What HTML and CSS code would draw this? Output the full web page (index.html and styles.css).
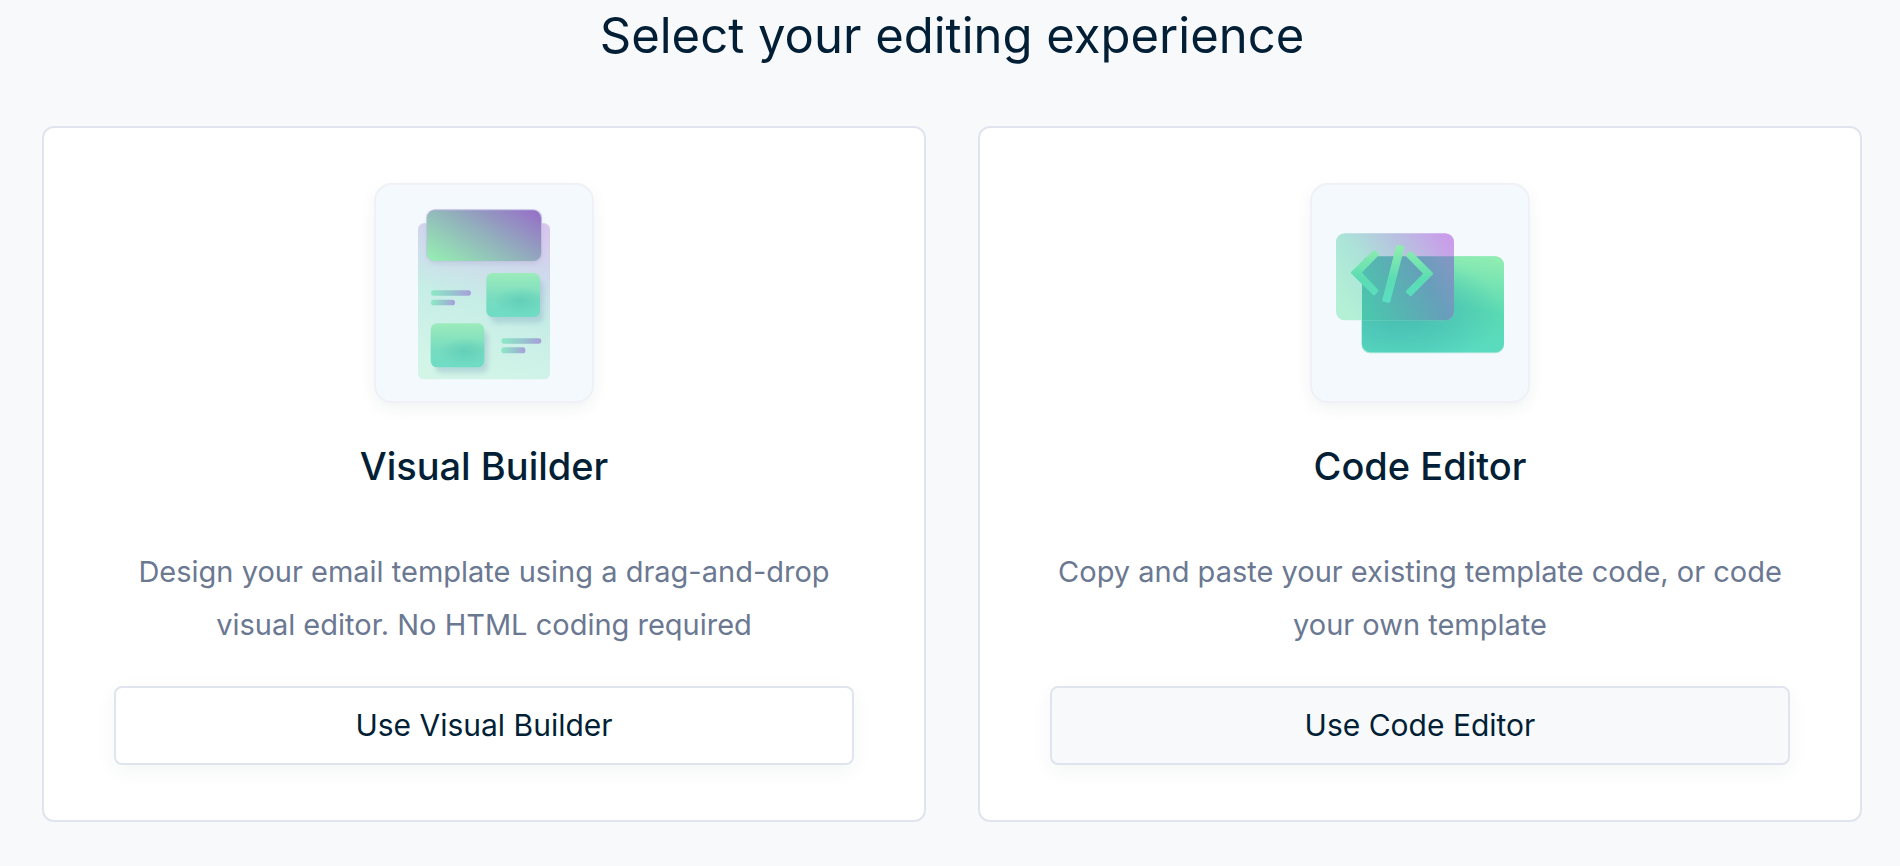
FILE: index.html
```html
<!DOCTYPE html>
<html lang="en">
<head>
<meta charset="utf-8">
<title>Select your editing experience</title>
<link rel="stylesheet" href="styles.css">
</head>
<body>
<main class="page">
  <h1 class="page-title">Select your editing experience</h1>
  <div class="options">
    <section class="card">
      <div class="tile">
        <svg class="art" viewBox="48 44 648 648" aria-hidden="true">
          <defs>
            <linearGradient id="sheet" gradientUnits="userSpaceOnUse" x1="560" y1="190" x2="420" y2="640">
              <stop offset="0" stop-color="#d8c8ee"/>
              <stop offset="0.25" stop-color="#cfd9ec"/>
              <stop offset="0.55" stop-color="#c6ede6"/>
              <stop offset="1" stop-color="#d3f5e8"/>
            </linearGradient>
            <linearGradient id="banner" gradientUnits="userSpaceOnUse" x1="275" y1="300" x2="425" y2="55">
              <stop offset="0" stop-color="#95ebb3"/>
              <stop offset="0.5" stop-color="#92b0bc"/>
              <stop offset="1" stop-color="#966fc8"/>
            </linearGradient>
            <linearGradient id="block" x1="0" y1="0" x2="0" y2="1">
              <stop offset="0" stop-color="#9cebbb"/>
              <stop offset="0.6" stop-color="#77dcc0"/>
              <stop offset="1" stop-color="#6fdcc5"/>
            </linearGradient>
            <radialGradient id="block-shade" cx="0.64" cy="0.64" r="0.5" gradientTransform="translate(0 0.23) scale(1 0.64)">
              <stop offset="0" stop-color="#5ccab5" stop-opacity="0.7"/>
              <stop offset="1" stop-color="#5ccab5" stop-opacity="0"/>
            </radialGradient>
            <linearGradient id="line" x1="0" y1="0" x2="1" y2="0">
              <stop offset="0" stop-color="#8ce9c6"/>
              <stop offset="0.5" stop-color="#95c8cd"/>
              <stop offset="1" stop-color="#a99edb"/>
            </linearGradient>
            <filter id="soft" x="-20%" y="-20%" width="150%" height="150%">
              <feGaussianBlur stdDeviation="8"/>
            </filter>
          </defs>
          <rect x="174" y="159" width="396" height="468" rx="17" fill="url(#sheet)"/>
          <rect x="202" y="126" width="342" height="154" rx="24" fill="#8b7fb5" opacity="0.2" filter="url(#soft)"/>
          <rect x="199" y="117" width="347" height="156" rx="26" fill="#c0bce0"/>
          <rect x="201" y="120" width="342" height="152" rx="24" fill="url(#banner)"/>
          <rect x="392" y="330" width="158" height="128" rx="18" fill="#7fa6bd" opacity="0.35" filter="url(#soft)"/>
          <rect x="379" y="308" width="161" height="132" rx="19" fill="url(#block)"/>
          <rect x="379" y="308" width="161" height="132" rx="19" fill="url(#block-shade)"/>
          <rect x="226" y="482" width="158" height="126" rx="18" fill="#7fa6bd" opacity="0.35" filter="url(#soft)"/>
          <rect x="212" y="459" width="161" height="132" rx="19" fill="url(#block)"/>
          <rect x="212" y="459" width="161" height="132" rx="19" fill="url(#block-shade)"/>
          <rect x="213" y="360" width="120" height="16" rx="8" fill="url(#line)"/>
          <rect x="213" y="388" width="72" height="17" rx="8" fill="url(#line)"/>
          <rect x="424" y="504" width="120" height="16" rx="8" fill="url(#line)"/>
          <rect x="424" y="531" width="72" height="18" rx="8" fill="url(#line)"/>
        </svg>
      </div>
      <h2 class="card-title">Visual Builder</h2>
      <p class="card-text">Design your email template using a drag-and-drop visual editor. No HTML coding required</p>
      <button class="action" type="button">Use Visual Builder</button>
    </section>
    <section class="card">
      <div class="tile">
        <svg class="art" viewBox="51 44 648 648" aria-hidden="true">
          <defs>
            <linearGradient id="back" gradientUnits="userSpaceOnUse" x1="595" y1="235" x2="535" y2="545">
              <stop offset="0" stop-color="#9af0b2"/>
              <stop offset="0.6" stop-color="#5adab3"/>
              <stop offset="1" stop-color="#5adbc0"/>
            </linearGradient>
            <radialGradient id="back-shade" gradientUnits="userSpaceOnUse" cx="320" cy="425" r="300" gradientTransform="translate(0 191) scale(1 0.55)">
              <stop offset="0" stop-color="#42b3af" stop-opacity="0.8"/>
              <stop offset="0.5" stop-color="#44b8b2" stop-opacity="0.5"/>
              <stop offset="1" stop-color="#44b8b2" stop-opacity="0"/>
            </radialGradient>
            <linearGradient id="front" gradientUnits="userSpaceOnUse" x1="150" y1="420" x2="455" y2="205">
              <stop offset="0" stop-color="#b4f0d6"/>
              <stop offset="0.33" stop-color="#abe4d8"/>
              <stop offset="0.65" stop-color="#b7c3df"/>
              <stop offset="1" stop-color="#c99dea"/>
            </linearGradient>
            <linearGradient id="overlap" gradientUnits="userSpaceOnUse" x1="225" y1="430" x2="475" y2="300">
              <stop offset="0" stop-color="#4cc5ae"/>
              <stop offset="0.35" stop-color="#58b2b2"/>
              <stop offset="0.7" stop-color="#669fba"/>
              <stop offset="1" stop-color="#8197c3"/>
            </linearGradient>
            <linearGradient id="code" gradientUnits="userSpaceOnUse" x1="0" y1="222" x2="0" y2="398">
              <stop offset="0" stop-color="#93edae"/>
              <stop offset="0.6" stop-color="#5bdcb3"/>
              <stop offset="1" stop-color="#5bdec4"/>
            </linearGradient>
            <clipPath id="back-clip"><rect x="201" y="258" width="426" height="288" rx="26"/></clipPath>
          </defs>
          <rect x="199" y="258" width="428" height="291" rx="27" fill="#a9e6da"/>
          <rect x="201" y="258" width="426" height="288" rx="26" fill="url(#back)"/>
          <rect x="201" y="258" width="426" height="288" rx="26" fill="url(#back-shade)"/>
          <rect x="123" y="189" width="354" height="261" rx="26" fill="url(#front)"/>
          <g clip-path="url(#back-clip)">
            <rect x="123" y="189" width="354" height="261" rx="26" fill="url(#overlap)"/>
          </g>
          <g fill="none" stroke="url(#code)" stroke-width="10" stroke-linejoin="round">
            <path fill="url(#code)" d="M238 245 L173 307 L237 370 L245 361 L194 307 L246 253 Z"/>
            <path fill="url(#code)" d="M347 248 L409 310 L347 372 L338 364 L391 310 L338 256 Z"/>
            <path fill="url(#code)" d="M308 229 L323 232 L281 392 L267 389 Z"/>
          </g>
        </svg>
      </div>
      <h2 class="card-title">Code Editor</h2>
      <p class="card-text">Copy and paste your existing template code, or code your own template</p>
      <button class="action action-active" type="button">Use Code Editor</button>
    </section>
  </div>
</main>
</body>
</html>
```
FILE: styles.css
```css
* {
  box-sizing: border-box;
}

body {
  margin: 0;
  background: #f8f9fb;
  color: #021f36;
  font-family: Inter, "Liberation Sans", sans-serif;
}

.page {
  padding: 4px 38px 44px 42px;
}

.page-title {
  margin: 0 0 58px;
  font-size: 49px;
  line-height: 64px;
  font-weight: 400;
  text-align: center;
}

.options {
  display: grid;
  grid-template-columns: 1fr 1fr;
  gap: 52px;
}

.card {
  display: flex;
  flex-direction: column;
  align-items: center;
  padding: 55px 70px;
  background: #fff;
  border: 2px solid #e0e4ee;
  border-radius: 12px;
  text-align: center;
}

.tile {
  width: 220px;
  height: 220px;
  border: 2px solid #eff1f7;
  border-radius: 18px;
  background: #f4f9fe;
  box-shadow: 0 6px 16px rgba(20, 50, 50, 0.06);
}

.art {
  display: block;
  width: 100%;
}

.card-title {
  margin: 36px 0 52px;
  font-size: 38px;
  line-height: 54px;
  font-weight: 500;
}

.card-text {
  margin: 0 0 35px;
  color: #6b7892;
  font-size: 29px;
  line-height: 53px;
}

.action {
  width: 100%;
  margin-top: auto;
  padding: 12px;
  border: 2px solid #e0e4ee;
  border-radius: 8px;
  background: #fff;
  box-shadow: 0 6px 20px rgba(20, 50, 50, 0.05);
  color: inherit;
  font-family: inherit;
  font-size: 30px;
  line-height: 51px;
}

.action-active {
  background: #f8f9fb;
}
```
